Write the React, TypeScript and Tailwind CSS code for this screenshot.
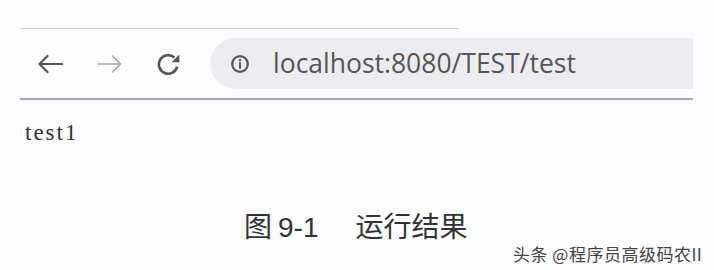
import React from 'react'

function BackIcon() {
  return (
    <svg width="26" height="20" viewBox="0 0 26 20" fill="none">
      <path d="M25 10H2.5M10.5 2L2.5 10L10.5 18" stroke="#555" strokeWidth="2.2" strokeLinecap="round" strokeLinejoin="round" />
    </svg>
  )
}

function ForwardIcon() {
  return (
    <svg width="26" height="20" viewBox="0 0 26 20" fill="none">
      <path d="M1 10H23.5M15.5 2L23.5 10L15.5 18" stroke="#a8a8a8" strokeWidth="1.6" strokeLinecap="round" strokeLinejoin="round" />
    </svg>
  )
}

function ReloadIcon() {
  return (
    <svg width="26" height="24" viewBox="0 0 26 24" fill="none">
      <path d="M18.3 5.4A9.3 9.3 0 1 0 21.2 14.6" stroke="#555" strokeWidth="2.6" />
      <path d="M23.4 2.4V10.2H15.6Z" fill="#555" />
    </svg>
  )
}

function InfoIcon() {
  return (
    <svg width="20" height="20" viewBox="0 0 20 20" fill="none">
      <circle cx="10" cy="10" r="7.8" stroke="#555" strokeWidth="2.2" />
      <path d="M10 9v5" stroke="#555" strokeWidth="2" strokeLinecap="round" />
      <circle cx="10" cy="6" r="1.2" fill="#555" />
    </svg>
  )
}

export default function App() {
  return (
    <div className="w-[714px] h-[270px] bg-[#fcfcfe] pt-[28px] overflow-hidden">
      <div className="ml-[20px] w-[438px] h-px bg-[#cfcfd4]" />

      <div className="mt-[9px] flex items-center h-[51px]">
        <div className="ml-[37px] flex">
          <BackIcon />
        </div>
        <div className="ml-[34px] flex">
          <ForwardIcon />
        </div>
        <div className="ml-[33px] flex">
          <ReloadIcon />
        </div>
        <div className="ml-[28px] w-[483px] h-[51px] bg-[#ededf1] rounded-l-full flex items-center pl-[20px]">
          <InfoIcon />
          <span className="ml-[23px] text-[26.5px] text-[#555] leading-none font-['Open_Sans',sans-serif]">
            localhost:8080/TEST/test
          </span>
        </div>
      </div>

      <div className="mt-[9px] ml-[20px] w-[673px] h-[2px] bg-[#a9a9ad]" />

      <div className="mt-[21px] ml-[25px] text-[23px] leading-none text-[#333] font-['Liberation_Serif',serif] tracking-[2px]">
        test1
      </div>

      <div className="mt-[70px] ml-[244px] flex items-center text-[28px] leading-none text-[#333] font-['Liberation_Sans','Noto_Sans_CJK_SC',sans-serif]">
        <span>图</span>
        <span className="ml-[6px]">9-1</span>
        <span className="ml-[37px]">运行结果</span>
      </div>

      <div className="mt-[3px] ml-[513px] text-[17px] leading-none text-[#444] tracking-[0.5px] font-['Noto_Sans_CJK_SC',sans-serif]">
        头条 @程序员高级码农II
      </div>
    </div>
  )
}
